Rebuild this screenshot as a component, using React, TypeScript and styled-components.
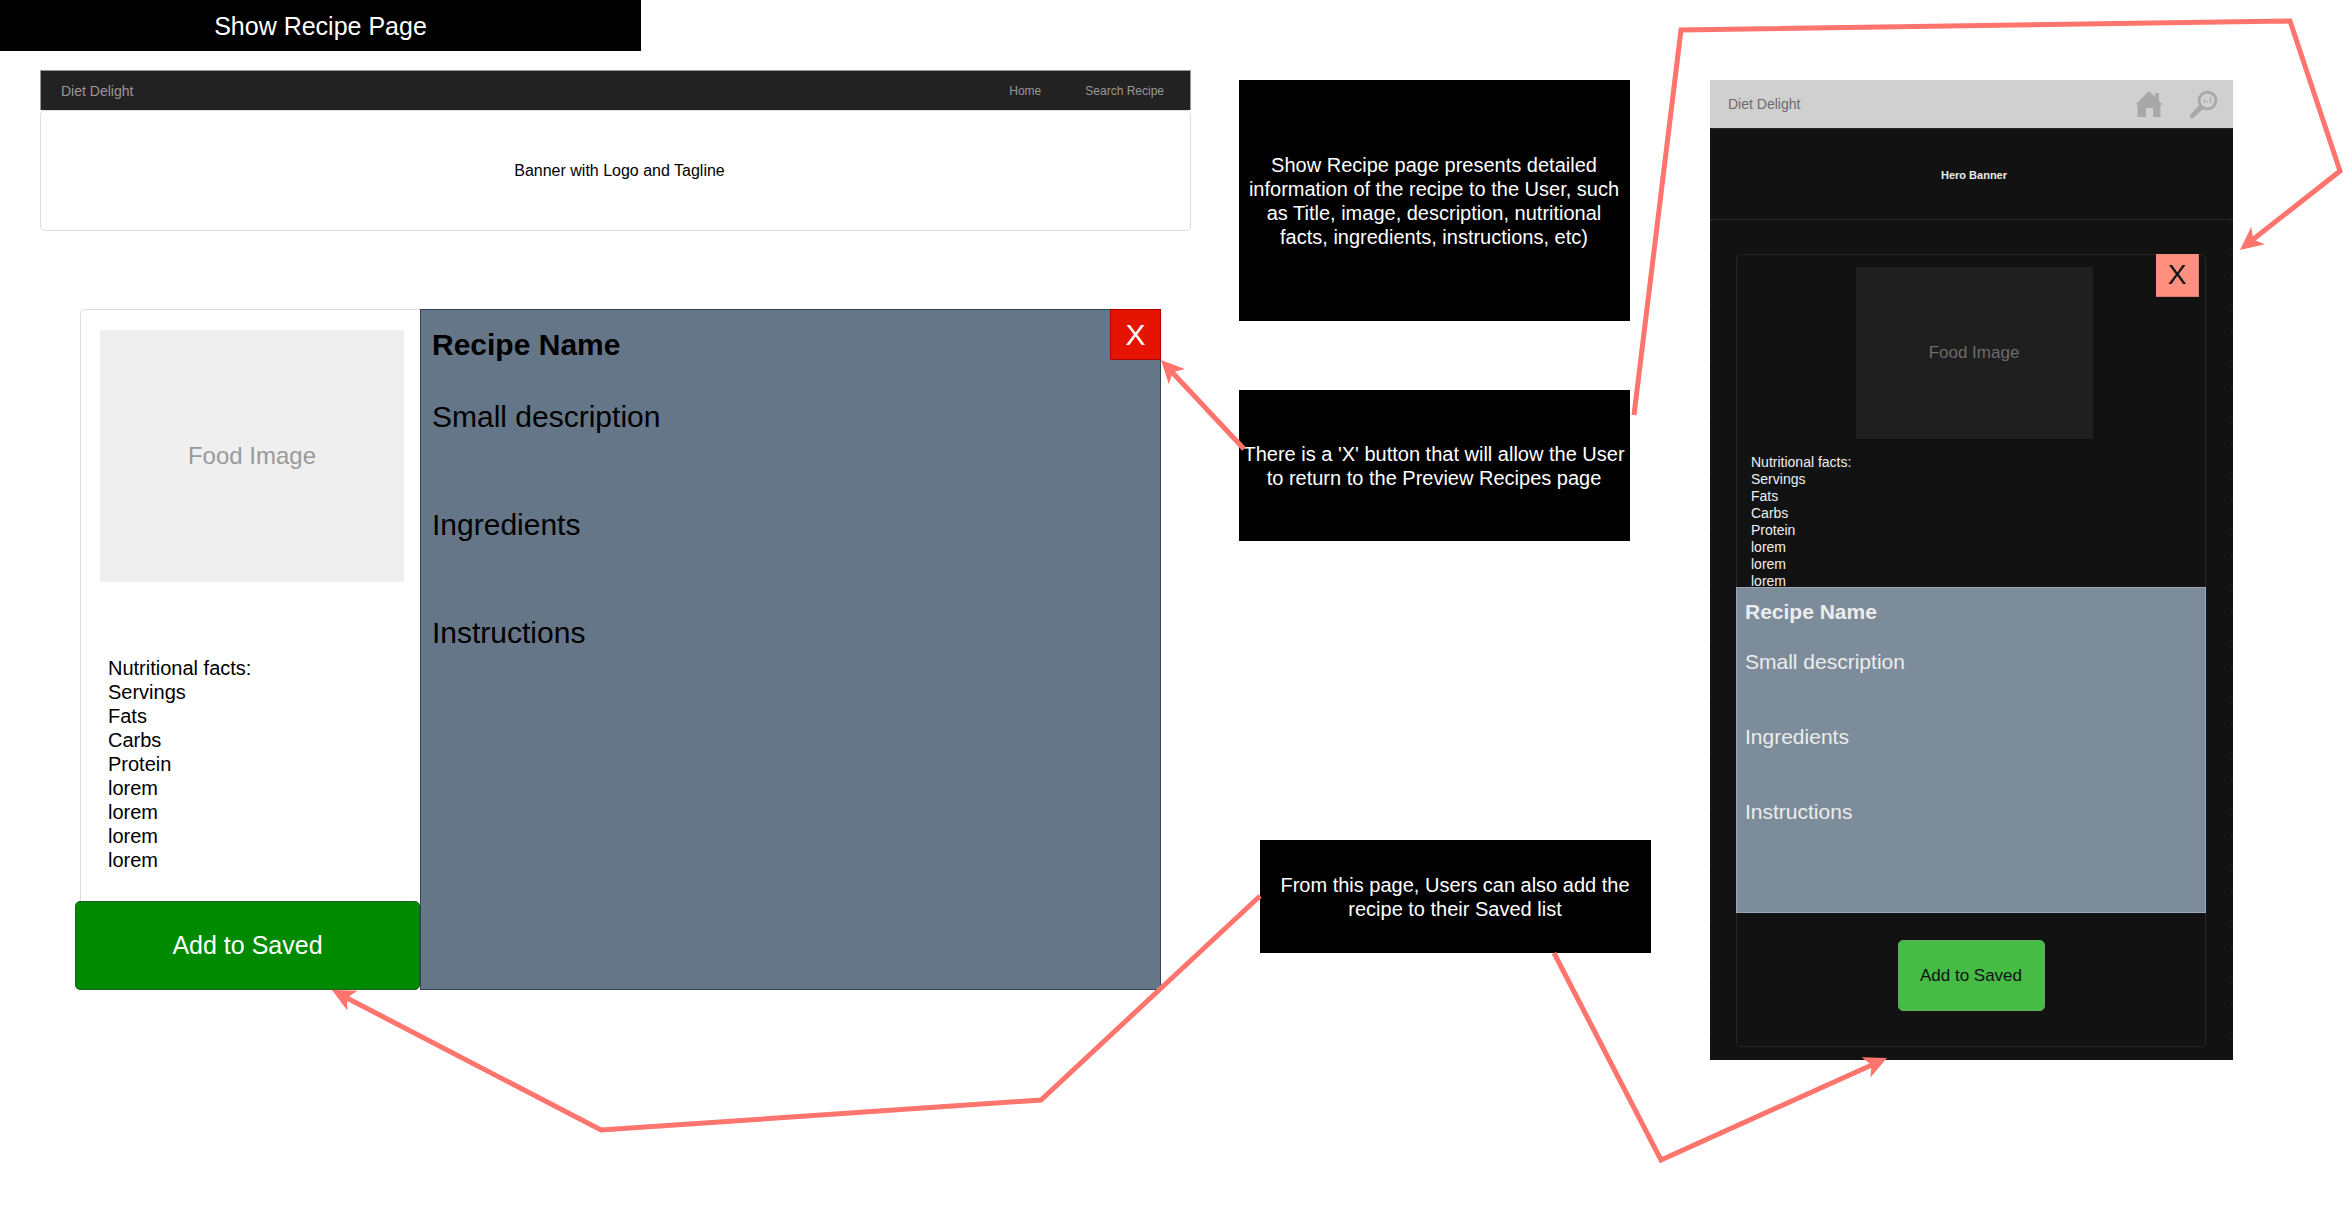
import React from "react";
import styled, { createGlobalStyle } from "styled-components";

const GlobalStyle = createGlobalStyle`
  * { box-sizing: border-box; }
  body {
    margin: 0;
    background: #ffffff;
    color: #000000;
    font-family: "Liberation Sans", Arial, Helvetica, sans-serif;
  }
  h1, h2, p, ul { margin: 0; padding: 0; }
  ul { list-style: none; }
  a { color: inherit; text-decoration: none; }
  button { font-family: inherit; cursor: pointer; padding: 0; }
`;

const Page = styled.main`
  position: relative;
  min-height: 100vh;
  overflow: hidden;
`;

const PageTitle = styled.h1`
  width: 641px;
  max-width: 100%;
  padding: 12px 0 10px;
  background: #000000;
  color: #ffffff;
  font-size: 25px;
  font-weight: 400;
  line-height: 29px;
  text-align: center;
`;

const Board = styled.div`
  display: grid;
  grid-template-columns: minmax(0, 1151fr) minmax(0, 423fr) minmax(0, 523fr);
  column-gap: 48px;
  align-items: start;
  padding: 19px 118px 0 40px;
`;

const DesktopNav = styled.nav`
  display: flex;
  align-items: center;
  gap: 44px;
  height: 40px;
  padding: 0 26px 0 20px;
  border: 1px solid #999999;
  border-bottom: 0;
  background: #222222;
  color: #999999;
  font-size: 12px;
`;

const Brand = styled.a`
  margin-right: auto;
  font-size: 14px;
`;

const DesktopBanner = styled.header`
  padding: 50px 0 50px 8px;
  border: 1px solid #dddddd;
  border-radius: 5px;
  font-size: 16px;
  line-height: 19px;
  text-align: center;
`;

const DesktopCard = styled.article`
  display: grid;
  grid-template-columns: minmax(0, 345fr) minmax(0, 741fr);
  margin: 78px 30px 0 35px;
`;

const Side = styled.div`
  display: flex;
  flex-direction: column;
`;

const SideBody = styled.div`
  flex: 1;
  margin-left: 5px;
  padding: 20px 16px 19px 19px;
  border: 1px solid #dddddd;
  border-width: 1px 0 0 1px;
  border-top-left-radius: 5px;
`;

const FoodImage = styled.div<{ $dark?: boolean }>`
  display: flex;
  align-items: center;
  justify-content: center;
  width: ${(p) => (p.$dark ? "237px" : "auto")};
  height: ${(p) => (p.$dark ? "172px" : "252px")};
  margin: ${(p) => (p.$dark ? "0 auto" : "0")};
  background: ${(p) => (p.$dark ? "#1f1f1f" : "#efefef")};
  color: ${(p) => (p.$dark ? "#6b6b6b" : "#999999")};
  font-size: ${(p) => (p.$dark ? "17px" : "24px")};
`;

const Facts = styled.ul<{ $small?: boolean }>`
  padding: ${(p) => (p.$small ? "15px 14px 0" : "74px 8px 0")};
  color: ${(p) => (p.$small ? "#f0f0f0" : "#000000")};
  font-size: ${(p) => (p.$small ? "14px" : "20px")};
  line-height: ${(p) => (p.$small ? "17px" : "24px")};
`;

const SaveButton = styled.button<{ $small?: boolean }>`
  display: block;
  width: ${(p) => (p.$small ? "147px" : "100%")};
  height: ${(p) => (p.$small ? "71px" : "89px")};
  margin: ${(p) => (p.$small ? "27px auto 35px" : "0")};
  border: 1px solid ${(p) => (p.$small ? "#5fae5c" : "#1f5c1f")};
  border-radius: 5px;
  background: ${(p) => (p.$small ? "#46bb46" : "#008a00")};
  color: ${(p) => (p.$small ? "#121212" : "#ffffff")};
  font-size: ${(p) => (p.$small ? "17px" : "25px")};
`;

const Details = styled.section<{ $small?: boolean }>`
  position: relative;
  padding: ${(p) => (p.$small ? "11px 8px 88px" : "17px 11px 338px")};
  border: 1px solid ${(p) => (p.$small ? "#98a8b8" : "#314354")};
  background: ${(p) => (p.$small ? "#7d8c9a" : "#647687")};
  color: ${(p) => (p.$small ? "#ececec" : "#000000")};
  font-size: ${(p) => (p.$small ? "21px" : "30px")};
  line-height: ${(p) => (p.$small ? "25px" : "36px")};

  h2 {
    font-size: inherit;
    line-height: inherit;
    margin-bottom: 1lh;
  }
  p + p { margin-top: 2lh; }
`;

const CloseButton = styled.button<{ $small?: boolean }>`
  position: absolute;
  top: -1px;
  right: ${(p) => (p.$small ? "6px" : "-1px")};
  width: ${(p) => (p.$small ? "43px" : "51px")};
  height: ${(p) => (p.$small ? "43px" : "51px")};
  border: 1px solid ${(p) => (p.$small ? "#dc7a70" : "#b20000")};
  border-width: ${(p) => (p.$small ? "0 1px 1px 0" : "1px")};
  background: ${(p) => (p.$small ? "#ff9080" : "#e51400")};
  color: ${(p) => (p.$small ? "#121212" : "#ffffff")};
  font-size: ${(p) => (p.$small ? "28px" : "30px")};
`;

const Notes = styled.aside`
  display: flex;
  flex-direction: column;
  padding: 10px 11px 0 0;
`;

const Note = styled.p<{ $pad: number }>`
  width: 391px;
  max-width: 100%;
  padding: ${(p) => p.$pad + 1}px 5px ${(p) => p.$pad}px 4px;
  background: #000000;
  color: #ffffff;
  font-size: 20px;
  line-height: 24px;
  text-align: center;

  && { margin-bottom: 69px; }
  &&:last-child {
    align-self: flex-end;
    margin: 230px 0 0;
  }
`;

const Phone = styled.section`
  margin-top: 10px;
  padding-bottom: 13px;
  background:
    repeating-linear-gradient(#262626 0 1px, transparent 1px 28px) 0 0 / 2px 100% no-repeat,
    repeating-linear-gradient(#262626 0 1px, transparent 1px 28px) 100% 0 / 2px 100% no-repeat,
    #121212;
`;

const PhoneNav = styled.nav`
  display: flex;
  align-items: center;
  gap: 27px;
  height: 48px;
  padding: 0 15px 0 18px;
  background: #d0d0d0;
  color: #6b6b6b;

  svg { display: block; }
`;

const PhoneBanner = styled.header`
  padding: 40px 0 38px 5px;
  border: 1px solid #262626;
  border-width: 1px 0;
  background: #121212;
  color: #ececec;
  font-size: 11px;
  font-weight: 700;
  line-height: 12px;
  text-align: center;
`;

const PhoneCard = styled.article`
  position: relative;
  margin: 34px 27px 0 26px;
  padding-top: 12px;
  border: 1px solid #262626;
  border-radius: 5px;

  ${Details} { margin: -3px -1px 0; }
`;

const PhotoRow = styled.div`
  padding-left: 6px;
`;

const Arrows = styled.svg`
  position: absolute;
  top: 0;
  left: 0;
  width: 100%;
  pointer-events: none;
`;

const desktopFacts = ["Nutritional facts:", "Servings", "Fats", "Carbs", "Protein", "lorem", "lorem", "lorem", "lorem"];
const phoneFacts = desktopFacts.slice(0, 8);

const arrows: { line: string; tip: string; angle: number }[] = [
  { line: "1244,449 1171,371", tip: "1161,360", angle: 226.5 },
  { line: "1634,415 1681,30 2290,21 2340,171 2251,241", tip: "2240,250", angle: 141.5 },
  { line: "1260,896 1041,1100 601,1130 345,997", tip: "332,990", angle: 207.5 },
  { line: "1554,953 1661,1160 1874,1064", tip: "1887,1058", angle: -24 },
];

function HomeIcon() {
  return (
    <svg width="27" height="27" viewBox="0 0 27 27" fill="#a8a8a8" aria-hidden="true">
      <path d="M13 0 19 6V2h4v8l4 3.500H24.500V26H17V17h-7v9H1.500V13.500H0V13Z" />
    </svg>
  );
}

function SearchIcon() {
  return (
    <svg width="28" height="30" viewBox="0 0 28 30" fill="none" stroke="#a8a8a8" aria-hidden="true">
      <circle cx="17.500" cy="11.500" r="8.400" strokeWidth="2.800" />
      <path d="M10 15.500 0.600 25.200a2.300 2.300 0 0 0 3.400 3.300L13.500 19.500Z" fill="#a8a8a8" stroke="none" />
      <path d="M14.500 14V10M17.500 14v-2M20.500 14V8" strokeWidth="1.200" />
    </svg>
  );
}

function Recipe({ small }: { small?: boolean }) {
  return (
    <Details $small={small}>
      <h2>Recipe Name</h2>
      <p>Small description</p>
      <p>Ingredients</p>
      <p>Instructions</p>
      {!small && <CloseButton>X</CloseButton>}
    </Details>
  );
}

function FactList({ items, small }: { items: string[]; small?: boolean }) {
  return (
    <Facts $small={small}>
      {items.map((item, i) => (
        <li key={i}>{item}</li>
      ))}
    </Facts>
  );
}

export default function App() {
  return (
    <Page>
      <GlobalStyle />
      <PageTitle>Show Recipe Page</PageTitle>
      <Board>
        <div>
          <DesktopNav>
            <Brand href="#">Diet Delight</Brand>
            <a href="#home">Home</a>
            <a href="#search">Search Recipe</a>
          </DesktopNav>
          <DesktopBanner>Banner with Logo and Tagline</DesktopBanner>
          <DesktopCard>
            <Side>
              <SideBody>
                <FoodImage>Food Image</FoodImage>
                <FactList items={desktopFacts} />
              </SideBody>
              <SaveButton>Add to Saved</SaveButton>
            </Side>
            <Recipe />
          </DesktopCard>
        </div>

        <Notes>
          <Note $pad={72}>
            Show Recipe page presents detailed information of the recipe to the User, such as Title, image,
            description, nutritional facts, ingredients, instructions, etc)
          </Note>
          <Note $pad={51}>There is a 'X' button that will allow the User to return to the Preview Recipes page</Note>
          <Note $pad={32}>From this page, Users can also add the recipe to their Saved list</Note>
        </Notes>

        <Phone>
          <PhoneNav>
            <Brand href="#">Diet Delight</Brand>
            <a href="#home" aria-label="Home"><HomeIcon /></a>
            <a href="#search" aria-label="Search Recipe"><SearchIcon /></a>
          </PhoneNav>
          <PhoneBanner>Hero Banner</PhoneBanner>
          <PhoneCard>
            <PhotoRow>
              <FoodImage $dark>Food Image</FoodImage>
            </PhotoRow>
            <FactList items={phoneFacts} small />
            <Recipe small />
            <SaveButton $small>Add to Saved</SaveButton>
            <CloseButton $small>X</CloseButton>
          </PhoneCard>
        </Phone>
      </Board>

      <Arrows viewBox="0 0 2351 1222" fill="none" aria-hidden="true">
        {arrows.map((a) => (
          <g key={a.tip}>
            <polyline points={a.line} stroke="#ff746c" strokeWidth="5" strokeMiterlimit="10" />
            <path d="M0 0-23 11-17 0-23-11Z" fill="#ff746c" transform={`translate(${a.tip}) rotate(${a.angle})`} />
          </g>
        ))}
      </Arrows>
    </Page>
  );
}
